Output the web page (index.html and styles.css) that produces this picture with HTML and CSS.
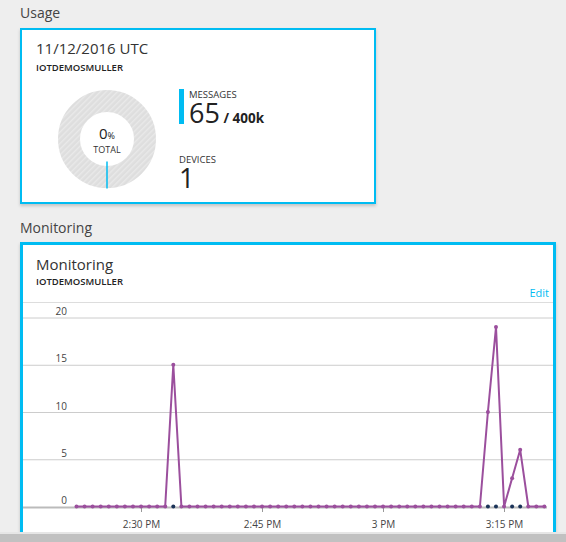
FILE: index.html
```html
<!DOCTYPE html>
<html>
<head>
<meta charset="utf-8">
<link rel="stylesheet" href="styles.css">
</head>
<body>
<div class="page">
  <div class="section-title">Usage</div>
  <div class="card usage">
    <div class="card-title">11/12/2016 UTC</div>
    <div class="card-sub">IOTDEMOSMULLER</div>
    <div class="usage-body">
      <div class="donut">
        <svg width="100" height="100" viewBox="0 0 100 100">
          <defs>
            <pattern id="hatch" width="4" height="4" patternUnits="userSpaceOnUse" patternTransform="rotate(45)">
              <rect width="4" height="4" fill="#dedede"/>
              <rect width="1.4" height="4" fill="#e9e9e9"/>
            </pattern>
          </defs>
          <circle cx="50" cy="50" r="38" fill="none" stroke="url(#hatch)" stroke-width="22"/>
          <line x1="50" y1="72.5" x2="50" y2="99.5" stroke="#00bcf2" stroke-width="1.5"/>
        </svg>
        <div class="donut-label">
          <div class="pct">0<span>%</span></div>
          <div class="total">TOTAL</div>
        </div>
      </div>
      <div class="stats">
        <div class="stat msg">
          <div class="stat-name">MESSAGES</div>
          <div class="stat-value">65<span class="of"> / 400k</span></div>
        </div>
        <div class="stat dev">
          <div class="stat-name">DEVICES</div>
          <div class="stat-value">1</div>
        </div>
      </div>
    </div>
  </div>

  <div class="section-title second">Monitoring</div>
  <div class="card monitor">
    <div class="mon-head">
      <div class="card-title">Monitoring</div>
      <div class="card-sub">IOTDEMOSMULLER</div>
      <div class="edit">Edit</div>
    </div>
    <div class="chart" id="chart"></div>
  </div>
</div>
<div class="scrollbar"></div>
<script src="chart.js"></script>
</body>
</html>
```

FILE: styles.css
```css
html, body {
  margin: 0;
  padding: 0;
  height: 542px;
  overflow: hidden;
  background: #eeeeee;
  font-family: "Open Sans", "Noto Sans", sans-serif;
  color: #333;
}
.page {
  padding: 0 11px 0 20px;
}
.section-title {
  font-size: 14px;
  line-height: 20px;
  padding-top: 3px;
  height: 25px;
  color: #444;
}
.section-title.second {
  padding-top: 14px;
  height: 24px;
}
.card {
  background: #fff;
  box-sizing: border-box;
  box-shadow: 0 2px 3px rgba(0,0,0,0.18);
}
.usage {
  width: 356px;
  height: 176px;
  border: 2px solid #00bcf2;
  padding: 8px 14px 0 14px;
}
.card-title {
  font-size: 15px;
  line-height: 20px;
  color: #333;
}
.card-sub {
  font-size: 9.5px;
  font-weight: 600;
  line-height: 14px;
  color: #222;
  margin-top: 3px;
}
.usage-body {
  display: flex;
  margin-top: 14px;
}
.donut {
  position: relative;
  width: 100px;
  height: 100px;
  margin-left: 21px;
}
.donut svg { display: block; }
.donut-label {
  position: absolute;
  left: 0;
  right: 0;
  top: 36px;
  text-align: center;
}
.pct {
  font-size: 15px;
  line-height: 16px;
  color: #222;
}
.pct span {
  font-size: 9px;
}
.total {
  font-size: 9px;
  line-height: 12px;
  color: #333;
}
.stats {
  margin-left: 22px;
  display: flex;
  flex-direction: column;
}
.stat.msg {
  border-left: 5px solid #00bcf2;
  padding-left: 5px;
  height: 35px;
}
.stat.dev {
  margin-top: 30px;
}
.stat-name {
  font-size: 9.5px;
  line-height: 12px;
  color: #333;
}
.stat-value {
  font-size: 27px;
  line-height: 24px;
  color: #222;
}
.stat-value .of {
  font-size: 13.5px;
  font-weight: 700;
}
.monitor {
  width: 536px;
  height: 320px;
  border: 3px solid #00bcf2;
}
.mon-head {
  position: relative;
  padding: 9px 13px 0 13px;
  height: 48px;
  border-bottom: 1px solid #dddddd;
}
.mon-head .card-sub {
  margin-top: 1px;
}
.edit {
  position: absolute;
  right: 4px;
  top: 40px;
  font-size: 11px;
  color: #00bcf2;
}
.chart svg {
  display: block;
}
.scrollbar {
  position: fixed;
  left: 0;
  right: 0;
  bottom: 0;
  height: 8px;
  border-top: 2px solid #e6e6e6;
  background: #c1c1c1;
}
```

FILE: chart.js
```javascript
(function () {
  var W = 530, H = 240;
  var ns = "http://www.w3.org/2000/svg";
  var svg = document.createElementNS(ns, "svg");
  svg.setAttribute("width", W);
  svg.setAttribute("height", H);
  function el(name, attrs, parent) {
    var e = document.createElementNS(ns, name);
    for (var k in attrs) e.setAttribute(k, attrs[k]);
    (parent || svg).appendChild(e);
    return e;
  }
  var y0 = 204, unit = 9.45;
  var labels = ["0", "5", "10", "15", "20"];
  for (var g = 0; g <= 4; g++) {
    var y = y0 - g * 5 * unit;
    if (g > 0) el("line", {x1: 0, x2: W, y1: y, y2: y, stroke: "#cccccc", "stroke-width": 1});
    var t = el("text", {x: 44, y: y - 3, "text-anchor": "end", "font-size": 10, fill: "#444",
      "font-family": "Open Sans, Noto Sans, sans-serif"});
    t.textContent = labels[g];
  }
  el("line", {x1: 0, x2: 524, y1: y0 + 0.5, y2: y0 + 0.5, stroke: "#bbbbbb", "stroke-width": 2});
  var ticks = [[8, "2:30 PM"], [23, "2:45 PM"], [38, "3 PM"], [53, "3:15 PM"]];
  function xi(i) { return 53.5 + 8.067 * i; }
  ticks.forEach(function (tk) {
    var x = Math.round(xi(tk[0])) + 0.5;
    el("line", {x1: x, x2: x, y1: y0 + 1, y2: y0 + 5, stroke: "#999", "stroke-width": 1});
    var t = el("text", {x: x, y: 225, "text-anchor": "middle", "font-size": 10, fill: "#444",
      "font-family": "Open Sans, Noto Sans, sans-serif"});
    t.textContent = tk[1];
  });
  var vals = [];
  for (var i = 0; i < 59; i++) vals.push(0);
  vals[12] = 15; vals[51] = 10; vals[52] = 19; vals[54] = 3; vals[55] = 6;
  var base = y0 - 0.5;
  var pts = vals.map(function (v, i) { return xi(i).toFixed(1) + "," + (base - v * unit).toFixed(1); });
  el("polyline", {points: pts.join(" "), fill: "none", stroke: "#9b4f9d", "stroke-width": 2, "stroke-linejoin": "round"});
  vals.forEach(function (v, i) {
    el("circle", {cx: xi(i), cy: base - v * unit, r: 2, fill: "#9b4f9d"});
  });
  vals.forEach(function (v, i) {
    if (v > 0) el("circle", {cx: xi(i), cy: base, r: 2, fill: "#1b3358"});
  });
  document.getElementById("chart").appendChild(svg);
})();
```
